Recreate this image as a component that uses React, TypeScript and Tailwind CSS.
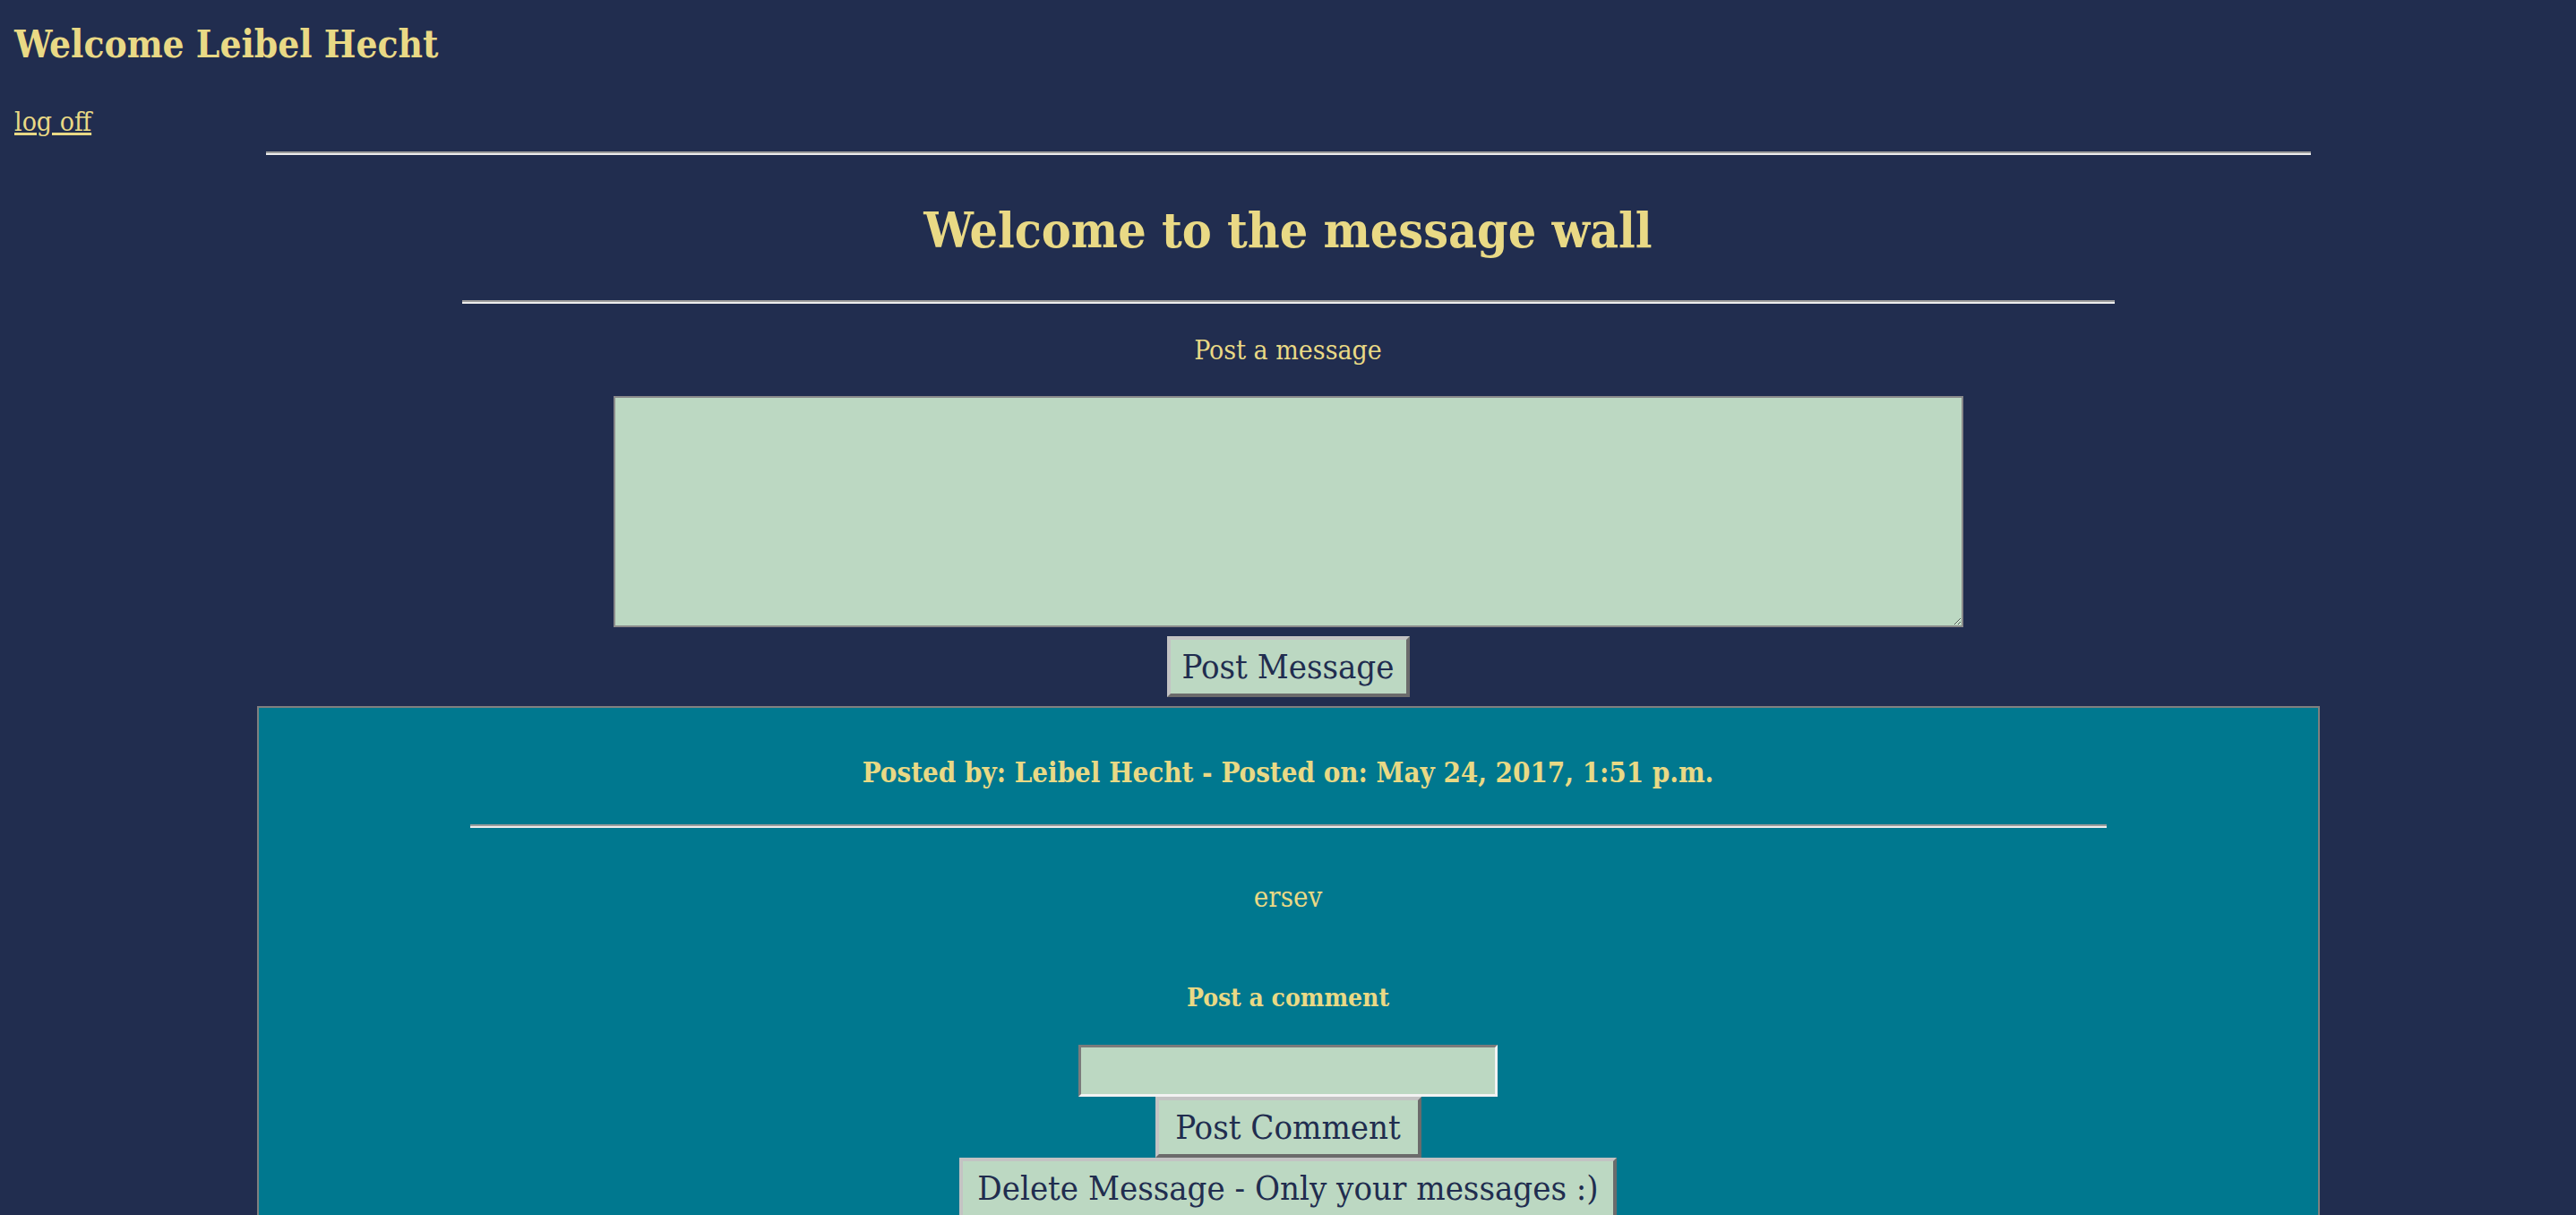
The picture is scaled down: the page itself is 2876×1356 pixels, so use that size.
import React from "react";

const font = "font-['DejaVu_Serif_Condensed','DejaVu_Serif',serif]";

function Rule({ width }: { width: string }) {
  return <div className={`mx-auto h-[4px] border-t-2 border-b-2 border-t-[#9c9c9c] border-b-[#ececec] ${width}`} />;
}

function Button({ label, width }: { label: string; width: string }) {
  return (
    <button
      className={`h-[68px] ${width} whitespace-nowrap border-4 border-t-[#c3c3c3] border-l-[#c3c3c3] border-b-[#6b6b6b] border-r-[#6b6b6b] bg-[#bcd8c2] text-[38px] leading-none text-[#212d4f] ${font}`}
    >
      {label}
    </button>
  );
}

export default function App() {
  return (
    <div className={`min-h-screen bg-[#212d4f] px-4 pb-10 text-[#e9d985] ${font}`}>
      <h2 className="pt-[26px] text-[42px] font-bold leading-[48px]">Welcome Leibel Hecht</h2>
      <a href="#" className="mt-[44px] block w-fit text-[30px] leading-[36px] underline">
        log off
      </a>
      <div className="mt-[15px]">
        <Rule width="w-[2283px]" />
      </div>

      <h1 className="mt-[52px] text-center text-[55px] font-bold leading-[64px]">Welcome to the message wall</h1>
      <div className="mt-[46px]">
        <Rule width="w-[1845px]" />
      </div>

      <div className="flex flex-col items-center">
        <p className="mt-[34px] text-[30px] leading-[36px]">Post a message</p>
        <textarea className="mt-[33px] h-[258px] w-[1507px] border-2 border-[#8a8a8a] bg-[#bcd8c2] outline-none" />
        <div className="mt-[10px]">
          <Button label="Post Message" width="w-[271px]" />
        </div>
      </div>

      <div className="mx-auto mt-[10px] h-[600px] w-[2303px] border-2 border-[#7f7f7f] bg-[#00788f]">
        <div className="flex flex-col items-center">
          <h3 className="mt-[52px] text-[31px] font-bold leading-[40px]">
            Posted by: Leibel Hecht - Posted on: May 24, 2017, 1:51 p.m.
          </h3>
          <div className="mt-[38px] w-full">
            <Rule width="w-[1827px]" />
          </div>
          <p className="mt-[59px] text-[31px] leading-[36px]">ersev</p>
          <h5 className="mt-[79px] text-[28px] font-bold leading-[32px]">Post a comment</h5>
          <input className="mt-[36px] h-[58px] w-[468px] border-[3px] border-t-[#7b7b7b] border-l-[#7b7b7b] border-b-[#f2f2f2] border-r-[#f2f2f2] bg-[#bcd8c2] outline-none" />
          <Button label="Post Comment" width="w-[297px]" />
          <Button label="Delete Message - Only your messages :)" width="w-[734px]" />
        </div>
      </div>
    </div>
  );
}
